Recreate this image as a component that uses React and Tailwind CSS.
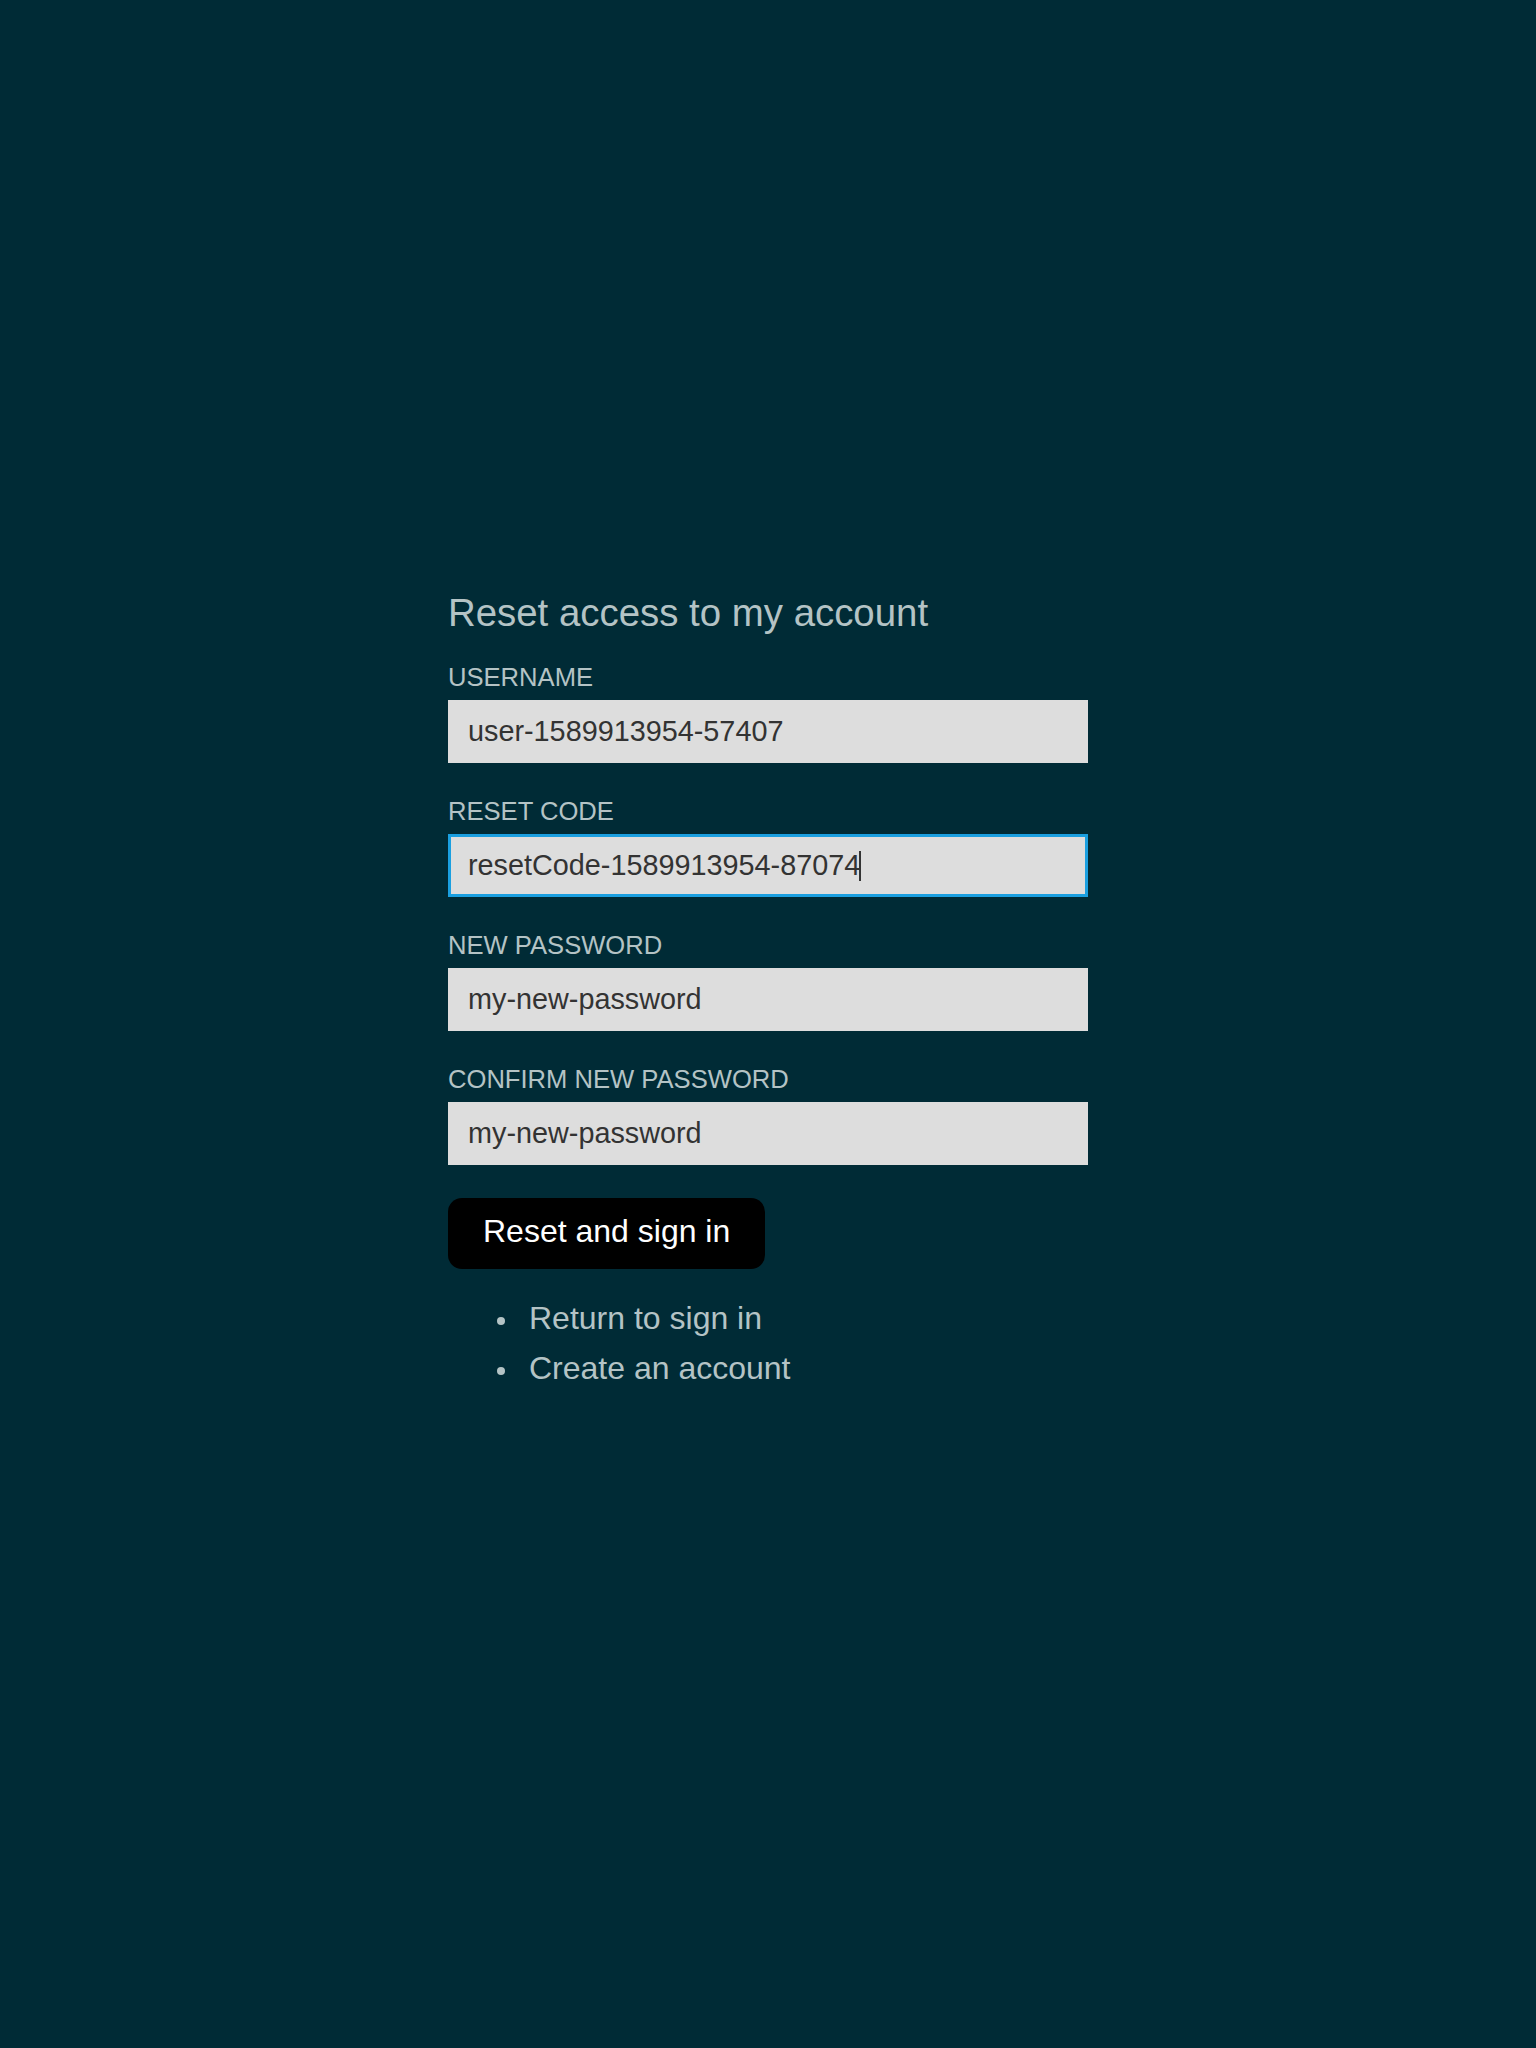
import React from "react";

const fields = [
  { label: "USERNAME", value: "user-1589913954-57407" },
  { label: "RESET CODE", value: "resetCode-1589913954-87074", focused: true },
  { label: "NEW PASSWORD", value: "my-new-password" },
  { label: "CONFIRM NEW PASSWORD", value: "my-new-password" },
];

export default function App() {
  return (
    <div
      className="min-h-[2048px] w-full bg-[#002b36] text-[#b4c3c5]"
      style={{ fontFamily: '"Liberation Sans", Arial, sans-serif' }}
    >
      <form
        className="mx-auto w-[640px] pt-[590px]"
        onSubmit={(e) => e.preventDefault()}
      >
        <h1 className="m-0 text-[38.4px] font-normal leading-[46px]">
          Reset access to my account
        </h1>
        <div className="mt-[26px] flex flex-col gap-[33px]">
          {fields.map((f) => (
            <label key={f.label} className="block">
              <span className="mb-[8px] block text-[25.6px] leading-[30px]">
                {f.label}
              </span>
              <span className="relative block">
                <input
                  readOnly
                  value={f.value}
                  className={
                    f.focused
                      ? "box-border block h-[63px] w-full border-[3px] border-[#1a9fe0] bg-[#dddddd] pl-[17px] text-[28.8px] text-[#333333] outline-none"
                      : "box-border block h-[63px] w-full border-0 bg-[#dddddd] pl-[20px] text-[28.8px] text-[#333333] outline-none"
                  }
                />
                {f.focused && (
                  <span className="pointer-events-none absolute left-[411px] top-[17px] h-[30px] w-[2px] bg-[#333333]" />
                )}
              </span>
            </label>
          ))}
        </div>
        <button
          type="submit"
          className="mt-[33px] h-[71px] rounded-[14px] bg-black px-[35px] pb-[18px] pt-[13px] text-[32px] leading-[40px] text-white"
        >
          Reset and sign in
        </button>
        <ul className="mt-[24px] pl-[49px] text-[32px] leading-[50px]">
          {["Return to sign in", "Create an account"].map((t) => (
            <li key={t} className="flex items-center">
              <span className="mr-[24px] mt-[5px] inline-block h-[8px] w-[8px] shrink-0 rounded-full bg-[#b4c3c5]" />
              <a href="#" className="text-[#b4c3c5] no-underline">
                {t}
              </a>
            </li>
          ))}
        </ul>
      </form>
    </div>
  );
}
